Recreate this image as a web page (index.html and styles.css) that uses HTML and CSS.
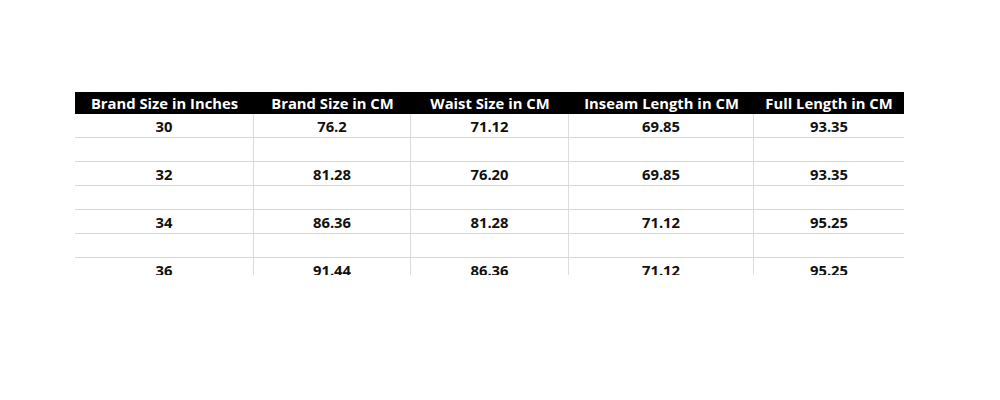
FILE: index.html
```html
<!DOCTYPE html>
<html>
<head>
<meta charset="utf-8">
<link rel="stylesheet" href="styles.css">
</head>
<body>
<div class="sheet">
  <div class="grid">
    <div class="hd">Brand Size in Inches</div>
    <div class="hd">Brand Size in CM</div>
    <div class="hd">Waist Size in CM</div>
    <div class="hd">Inseam Length in CM</div>
    <div class="hd">Full Length in CM</div>

    <div class="c">30</div><div class="c">76.2</div><div class="c">71.12</div><div class="c">69.85</div><div class="c">93.35</div>
    <div class="c"></div><div class="c"></div><div class="c"></div><div class="c"></div><div class="c"></div>
    <div class="c">32</div><div class="c">81.28</div><div class="c">76.20</div><div class="c">69.85</div><div class="c">93.35</div>
    <div class="c"></div><div class="c"></div><div class="c"></div><div class="c"></div><div class="c"></div>
    <div class="c">34</div><div class="c">86.36</div><div class="c">81.28</div><div class="c">71.12</div><div class="c">95.25</div>
    <div class="c"></div><div class="c"></div><div class="c"></div><div class="c"></div><div class="c"></div>
    <div class="c">36</div><div class="c">91.44</div><div class="c">86.36</div><div class="c">71.12</div><div class="c">95.25</div>
  </div>
</div>
</body>
</html>
```
FILE: styles.css
```css
html, body {
  margin: 0;
  padding: 0;
  background: #fff;
}
body {
  padding: 92px 0 0 75px;
  font-family: "Open Sans", Lato, "Liberation Sans", sans-serif;
}
.sheet {
  width: 829px;
  height: 183px;
  overflow: hidden;
}
.grid {
  display: grid;
  grid-template-columns: 179px 157px 158px 185px 150px;
  grid-auto-rows: 24px;
  grid-template-rows: 22px;
}
.hd {
  background: #000;
  color: #fff;
  font-weight: 700;
  font-size: 14.8px;
  display: flex;
  align-items: center;
  justify-content: center;
  white-space: nowrap;
  padding-bottom: 1px;
  box-sizing: border-box;
}
.c {
  box-sizing: border-box;
  border-bottom: 1px solid #d6d6d6;
  border-right: 1px solid #dcdcdc;
  display: flex;
  align-items: center;
  justify-content: center;
  font-weight: 700;
  font-size: 14.8px;
  color: #111;
}
.c:nth-child(5n) {
  border-right: none;
}
```
